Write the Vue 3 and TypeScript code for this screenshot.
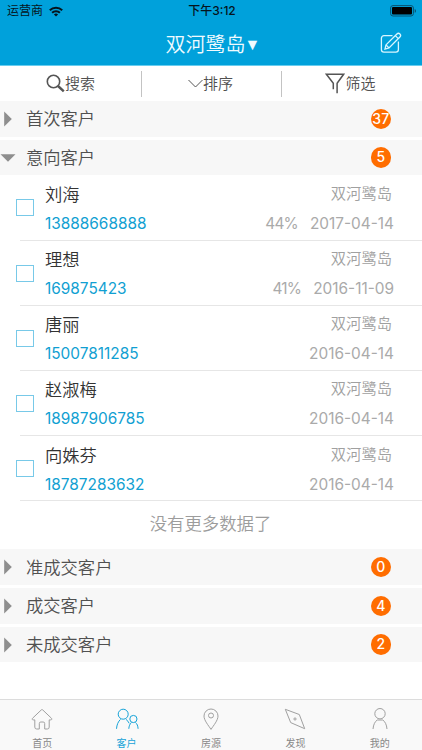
<script setup lang="ts">
interface Customer {
  name: string
  phone: string
  project: string
  rate?: string
  date: string
}
interface Group {
  title: string
  count: number
  open?: boolean
  customers?: Customer[]
}
interface Tab {
  label: string
  icon: string
  active?: boolean
}

const project = '双河鹭岛'

const groups: Group[] = [
  { title: '首次客户', count: 37 },
  {
    title: '意向客户',
    count: 5,
    open: true,
    customers: [
      { name: '刘海', phone: '13888668888', project, rate: '44%', date: '2017-04-14' },
      { name: '理想', phone: '169875423', project, rate: '41%', date: '2016-11-09' },
      { name: '唐丽', phone: '15007811285', project, date: '2016-04-14' },
      { name: '赵淑梅', phone: '18987906785', project, date: '2016-04-14' },
      { name: '向姝芬', phone: '18787283632', project, date: '2016-04-14' },
    ],
  },
  { title: '准成交客户', count: 0 },
  { title: '成交客户', count: 4 },
  { title: '未成交客户', count: 2 },
]

const tabs: Tab[] = [
  { label: '首页', icon: 'home' },
  { label: '客户', icon: 'people', active: true },
  { label: '房源', icon: 'pin' },
  { label: '发现', icon: 'compass' },
  { label: '我的', icon: 'me' },
]
</script>

<template>
  <div class="screen">
    <header class="header">
      <div class="status">
        <div class="carrier">
          <span>运营商</span>
          <svg class="wifi" viewBox="0 0 14 11" width="14" height="11">
            <g fill="none" stroke="#06141c" stroke-width="2">
              <path d="M.8 4.2a8.8 8.8 0 0 1 12.4 0" />
              <path d="M3.1 6.8a5.5 5.5 0 0 1 7.8 0" />
            </g>
            <path d="M7 10.6 4.9 8.5a3 3 0 0 1 4.2 0z" fill="#06141c" />
          </svg>
        </div>
        <span class="time">下午3:12</span>
        <div class="power">
          <svg viewBox="0 0 27 12" width="27" height="12">
            <rect x=".6" y=".6" width="22.8" height="10.4" rx="2.4" fill="none" stroke="#075371" stroke-width="1" />
            <rect x="2" y="2" width="20" height="7.6" rx="1" fill="#000" />
            <path d="M24.7 4v3.8q1.3-.5 1.3-1.9T24.7 4z" fill="#075371" />
          </svg>
        </div>
      </div>
      <div class="nav">
        <h1 class="title"><span>双河鹭岛</span><span class="caret">▼</span></h1>
        <svg class="compose" viewBox="0 0 22 22" width="22" height="22" fill="none" stroke="#d9f6ff" stroke-width="1.3">
          <path d="M12.5 3.7H4a2.6 2.6 0 0 0-2.6 2.6v11.2A2.6 2.6 0 0 0 4 20.1h11.8a2.6 2.6 0 0 0 2.6-2.6V9.5" />
          <path d="M6 12.9 16.9 2a2.1 2.1 0 0 1 3 3L9 15.9l-4 1.2zM15.3 3.6l3 3M6 12.9l3 3" />
        </svg>
      </div>
    </header>

    <div class="tools">
      <div class="tool search">
        <svg viewBox="0 0 19 19" width="19" height="19" fill="none" stroke="#555">
          <circle cx="7.5" cy="7.5" r="6.2" stroke-width="1.6" />
          <path d="m12 12 5.8 5.4" stroke-width="2.4" />
        </svg>
        <span>搜索</span>
      </div>
      <div class="tool sort">
        <svg viewBox="0 0 15 9" width="15" height="9" fill="none" stroke="#555">
          <path d="m.5 1 7 7 7-7" stroke-width="1" />
        </svg>
        <span>排序</span>
      </div>
      <div class="tool filter">
        <svg viewBox="0 0 20 21" width="20" height="21" fill="none" stroke="#555" stroke-width="1.5">
          <path d="M8.3 16.3v-6L1.4 1.3h17.2l-6.5 9v9.9" />
        </svg>
        <span>筛选</span>
      </div>
    </div>

    <main class="groups">
      <section v-for="group in groups" :key="group.title" class="group">
        <div class="group-head">
          <div class="arrow-slot">
            <svg v-if="group.open" viewBox="0 0 16 8" width="16" height="8"><path d="M.5.3h15L8 7.8z" fill="#8e8e8e" /></svg>
            <svg v-else class="closed" viewBox="0 0 8 16" width="8" height="16"><path d="M.2.5v15L7.8 8z" fill="#8e8e8e" /></svg>
          </div>
          <span class="group-title">{{ group.title }}</span>
          <span class="badge">{{ group.count }}</span>
        </div>
        <template v-if="group.customers">
          <div v-for="c in group.customers" :key="c.phone" class="customer">
            <span class="check"></span>
            <div class="info">
              <div class="line">
                <span class="name">{{ c.name }}</span>
                <span class="project">{{ c.project }}</span>
              </div>
              <div class="line">
                <span class="phone">{{ c.phone }}</span>
                <span class="meta"><span v-if="c.rate" class="rate">{{ c.rate }}</span><span>{{ c.date }}</span></span>
              </div>
            </div>
          </div>
          <p class="end">没有更多数据了</p>
        </template>
      </section>
    </main>

    <nav class="tabs">
      <div v-for="tab in tabs" :key="tab.label" class="tab" :class="{ active: tab.active }">
        <svg viewBox="0 0 24 24" width="24" height="24" fill="none" stroke="currentColor" stroke-width="1">
          <path v-if="tab.icon === 'home'" d="M11.3 2.9 2.6 11.2c-.8.8-.4 1.7.6 1.7h1.6v7.2q0 1.9 1.9 1.9h2.6v-5.5q0-1.5 1.5-1.5h2.4q1.5 0 1.5 1.5V22h2.6q1.9 0 1.9-1.9v-7.2h1.6c1 0 1.4-.9.6-1.7L12.7 2.9q-.7-.7-1.4 0z" />
          <template v-else-if="tab.icon === 'people'">
            <circle cx="8.2" cy="7.2" r="5" />
            <circle cx="18.4" cy="12" r="3.6" />
            <path d="M1.5 21.8c.3-4 1.7-7.4 4-9.4M11 12.4c1.500 1 2.500 2.400 3.200 4M13.800 21.800c.2-2.700 1-4.700 2.600-6.300M20.400 15.500c1.700 1.200 2.500 3.400 2.700 6.300" />
          </template>
          <template v-else-if="tab.icon === 'pin'">
            <path d="M12 22.4C9.5 18.5 5 13.4 5 9a7 7 0 0 1 14 0c0 4.4-4.5 9.5-7 13.4z" />
            <circle cx="12" cy="8.5" r="2.5" />
          </template>
          <template v-else-if="tab.icon === 'compass'">
            <path d="M2.3 2.3 16.3 7.5l5.4 14.2-14-6.1z" />
            <circle cx="12" cy="12" r="1.1" />
          </template>
          <template v-else>
            <circle cx="12" cy="6.7" r="5.2" />
            <path d="M5 22c.4-4.5 2-7.5 4.2-9h5.6c2.2 1.5 3.8 4.5 4.2 9" />
          </template>
        </svg>
        <span>{{ tab.label }}</span>
      </div>
    </nav>
  </div>
</template>

<style>
body {
  margin: 0;
  background: #fff;
}
</style>

<style scoped>
.screen {
  width: 422px;
  height: 750px;
  display: flex;
  flex-direction: column;
  overflow: hidden;
  background: #fff;
  color: #505050;
  font-family: Inter, "Noto Sans CJK SC", sans-serif;
  font-weight: 350;
}
.screen * {
  box-sizing: border-box;
}
svg {
  display: block;
  flex: none;
}
.header {
  flex: none;
  height: 66px;
  background: #00a1db;
  border-bottom: 1px solid #68cdef;
}
.status {
  height: 22px;
  padding: 0 5px 0 7px;
  display: grid;
  grid-template-columns: 1fr auto 1fr;
  align-items: center;
  font-size: 12px;
  font-weight: 400;
  line-height: 22px;
  color: #06141c;
}
.carrier {
  display: flex;
  align-items: center;
  gap: 6px;
}
.time {
  font-weight: 500;
}
.power {
  display: flex;
  justify-content: flex-end;
}
.nav {
  height: 43px;
  display: grid;
  grid-template-columns: 1fr auto 1fr;
  align-items: center;
}
.title {
  grid-column: 2;
  display: flex;
  margin: 0;
  padding-top: 3px;
  font-size: 20px;
  line-height: 40px;
  font-weight: 350;
  color: #f0fbff;
}
.caret {
  width: 12px;
  margin-left: -1px;
  font-family: "DejaVu Sans", sans-serif;
  font-size: 16px;
}
.compose {
  justify-self: end;
  margin: -1px 20px 0 0;
}
.tools {
  flex: none;
  height: 35px;
  display: grid;
  grid-template-columns: 141px 140px 141px;
  align-items: center;
  font-size: 15px;
}
.tool {
  height: 26px;
  display: flex;
  align-items: center;
  justify-content: center;
  line-height: 28px;
}
.tool + .tool {
  border-left: 1px solid #c3c3c3;
}
.tool.sort {
  padding-right: 2px;
}
.tool.filter {
  padding-right: 3px;
}
.groups {
  flex: 1;
  min-height: 0;
}
.group {
  margin-bottom: 3px;
}
.group-head {
  height: 35.7px;
  display: flex;
  align-items: center;
  padding-right: 31px;
  background: #f7f7f7;
}
.arrow-slot {
  width: 26px;
  display: flex;
}
.closed {
  margin-left: 4px;
}
.group-title {
  flex: 1;
  padding-top: 1px;
  font-size: 17.3px;
  line-height: 34px;
}
.badge {
  width: 20.5px;
  height: 20.5px;
  border-radius: 50%;
  background: #ff6d00;
  color: #fff;
  font-size: 14px;
  font-weight: 500;
  line-height: 20.5px;
  display: flex;
  justify-content: center;
}
.customer {
  height: 65.2px;
  display: flex;
  align-items: center;
  margin-left: 20px;
  padding-right: 29px;
  border-bottom: 1px solid #e6e6e6;
}
.check {
  width: 18px;
  height: 17px;
  margin: 1px 11px 0 -4px;
  border: 1px solid #78c9e8;
}
.info {
  flex: 1;
  padding-top: 2.6px;
}
.line {
  height: 29px;
  display: flex;
  align-items: center;
  justify-content: space-between;
  line-height: 29px;
}
.name {
  font-size: 17.3px;
  color: #333;
}
.project {
  margin: -2px 1px 0 0;
  font-size: 15.3px;
  color: #a0a0a0;
}
.phone {
  font-size: 15.4px;
  font-weight: 400;
  color: #119fd2;
}
.meta {
  display: flex;
  gap: 12px;
  margin-right: -1px;
  font-size: 15.4px;
  font-weight: 400;
  color: #aaa;
}
.rate {
  letter-spacing: -0.8px;
}
.end {
  height: 45px;
  margin: 0;
  padding-right: 1px;
  text-align: center;
  font-size: 17.4px;
  line-height: 46px;
  color: #9c9c9c;
}
.tabs {
  flex: none;
  height: 51px;
  display: grid;
  grid-template-columns: repeat(5, 1fr);
  border-top: 1px solid #dcdcdc;
  background: #f9f9f9;
}
.tab {
  display: flex;
  flex-direction: column;
  align-items: center;
  padding-top: 7px;
  color: #a0a0a0;
}
.tab span {
  font-size: 10px;
  font-weight: 400;
  line-height: 14px;
  margin-top: 5px;
  color: #888;
}
.tab.active,
.tab.active span {
  color: #16a3d8;
}
</style>
